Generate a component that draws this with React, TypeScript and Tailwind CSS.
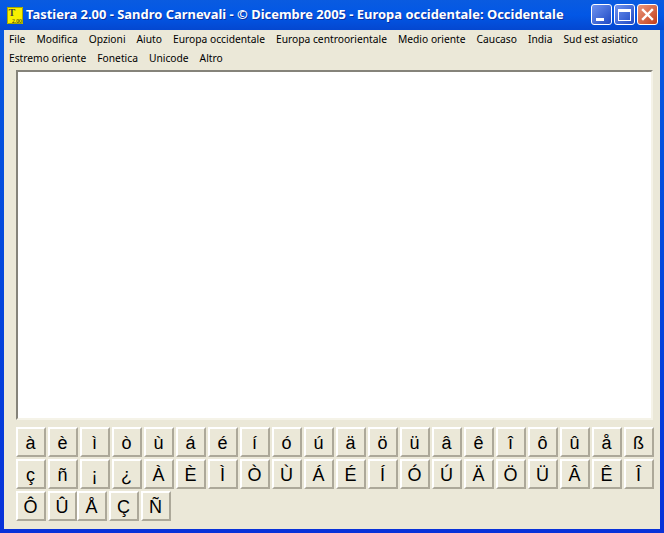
import { clsx } from 'clsx'

const MENU_ONE = ['File', 'Modifica', 'Opzioni', 'Aiuto', 'Europa occidentale', 'Europa centroorientale', 'Medio oriente', 'Caucaso', 'India', 'Sud est asiatico']
const MENU_TWO = ['Estremo oriente', 'Fonetica', 'Unicode', 'Altro']

const ROW_ONE = ['à', 'è', 'ì', 'ò', 'ù', 'á', 'é', 'í', 'ó', 'ú', 'ä', 'ö', 'ü', 'â', 'ê', 'î', 'ô', 'û', 'å', 'ß']
const ROW_TWO = ['ç', 'ñ', '¡', '¿', 'À', 'È', 'Ì', 'Ò', 'Ù', 'Á', 'É', 'Í', 'Ó', 'Ú', 'Ä', 'Ö', 'Ü', 'Â', 'Ê', 'Î']

function Key({ char, className }: { char: string; className?: string }) {
  return (
    <button
      type="button"
      className={clsx(
        "h-[30px] shrink-0 flex items-center justify-center pt-[1px] pr-[1px] bg-[#ebe8d8] border-2 border-t-white border-l-white border-r-[#aca899] border-b-[#aca899] text-black text-[18px] leading-none font-['Liberation_Sans',sans-serif]",
        className ?? 'w-[30px]',
      )}
    >
      {char}
    </button>
  )
}

function MenuRow({ items }: { items: string[] }) {
  return (
    <div className="flex h-[19px] items-center gap-[11px] pl-[5px] text-[10.25px] text-black font-['Noto_Sans',sans-serif]">
      {items.map(item => <span key={item} className="whitespace-nowrap">{item}</span>)}
    </div>
  )
}

function WindowButtons() {
  return (
    <div className="flex gap-[2px] pb-[1px]">
      <div className="w-[21px] h-[21px] rounded-[3px] border border-white bg-gradient-to-br from-[#6f92ef] to-[#1f48c4] flex items-end pl-[4px] pb-[3px]">
        <div className="w-[8px] h-[3px] bg-white" />
      </div>
      <div className="w-[21px] h-[21px] rounded-[3px] border border-white bg-gradient-to-br from-[#6f92ef] to-[#1f48c4] flex items-center justify-center">
        <div className="w-[13px] h-[12px] border border-white border-t-[3px]" />
      </div>
      <div className="w-[21px] h-[21px] rounded-[3px] border border-white bg-gradient-to-br from-[#e9967a] to-[#c23a14] flex items-center justify-center">
        <svg width="13" height="13" viewBox="0 0 13 13">
          <path d="M2 2 L11 11 M11 2 L2 11" stroke="white" strokeWidth="2.4" strokeLinecap="square" fill="none" />
        </svg>
      </div>
    </div>
  )
}

function AppIcon() {
  return (
    <svg width="16" height="17" viewBox="0 0 16 17" className="shrink-0">
      <rect x="0" y="0" width="16" height="17" fill="#f8f000" />
      <path d="M0 0.5 H15.5 V16.5 H0.5 V0" stroke="#a8a800" fill="none" />
      <text x="1.5" y="8.5" fontSize="10" fontWeight="bold" fontFamily="Liberation Serif, serif" fill="#444">T</text>
      <text x="5" y="15.5" fontSize="5.5" fontFamily="Liberation Serif, serif" fill="#111">2.00</text>
    </svg>
  )
}

export default function App() {
  return (
    <div className="w-[664px] h-[533px] flex flex-col overflow-hidden bg-gradient-to-b from-[#0a5be0] to-[#0831d9]">
      <div className="h-[30px] shrink-0 flex items-center pl-[7px] pr-[6px] rounded-t-[7px] bg-gradient-to-b from-[#0a5be0] via-[#0257e6] to-[#0447d0]">
        <AppIcon />
        <span className="ml-[3px] flex-1 whitespace-nowrap text-[12.95px] font-bold text-white [text-shadow:1px_1px_0_#0a2f9e] font-['Noto_Sans',sans-serif]">
          Tastiera 2.00 - Sandro Carnevali - © Dicembre 2005 - Europa occidentale: Occidentale
        </span>
        <WindowButtons />
      </div>

      <div className="flex-1 mx-[4px] mb-[4px] bg-[#ebe8d8] flex flex-col">
        <MenuRow items={MENU_ONE} />
        <MenuRow items={MENU_TWO} />

        <div className="h-[350px] mt-[2px] ml-[12px] mr-[7px] bg-white border-2 border-t-[#85837a] border-l-[#85837a] border-r-[#f5f3e8] border-b-[#f5f3e8]" />

        <div className="mt-[7px] ml-[12px] flex flex-col gap-[2px]">
          <div className="flex gap-[2px]">{ROW_ONE.map(c => <Key key={c} char={c} />)}</div>
          <div className="flex gap-[2px]">{ROW_TWO.map(c => <Key key={c} char={c} />)}</div>
          <div className="flex">
            <Key char="Ô" className="w-[30px] mr-[2px]" />
            <Key char="Û" className="w-[29px]" />
            <Key char="Å" className="w-[30px] mr-[2px]" />
            <Key char="Ç" className="w-[30px] mr-[2px]" />
            <Key char="Ñ" className="w-[30px]" />
          </div>
        </div>
      </div>
    </div>
  )
}
